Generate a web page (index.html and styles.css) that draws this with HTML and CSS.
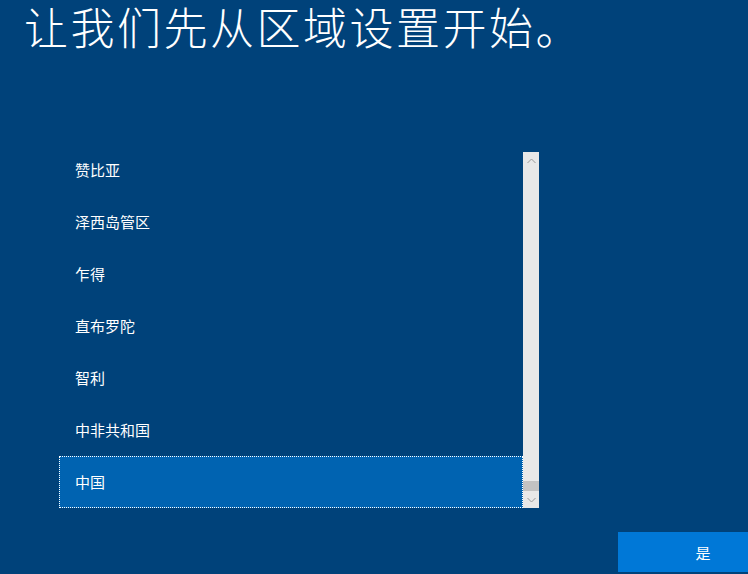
FILE: index.html
```html
<!DOCTYPE html>
<html lang="zh-CN">
<head>
<meta charset="utf-8">
<title>区域设置</title>
<link rel="stylesheet" href="styles.css">
</head>
<body>
<div class="page">
  <header class="header">
    <h1 class="title">让我们先从区域设置开始。</h1>
  </header>
  <div class="listbox">
    <div class="viewport">
      <ul class="items">
        <li class="item">赞比亚</li>
        <li class="item">泽西岛管区</li>
        <li class="item">乍得</li>
        <li class="item">直布罗陀</li>
        <li class="item">智利</li>
        <li class="item">中非共和国</li>
        <li class="item selected">中国</li>
      </ul>
    </div>
    <div class="scrollbar">
      <div class="sb-btn">
        <svg width="9" height="6" viewBox="0 0 9 6"><path d="M0.5 5 L4.5 1 L8.5 5" fill="none" stroke="#9a9a9a" stroke-width="1"/></svg>
      </div>
      <div class="sb-track"><div class="sb-thumb"></div></div>
      <div class="sb-btn">
        <svg width="9" height="6" viewBox="0 0 9 6"><path d="M0.5 1 L4.5 5 L8.5 1" fill="none" stroke="#9a9a9a" stroke-width="1"/></svg>
      </div>
    </div>
  </div>
  <footer class="footer">
    <button class="btn-yes">是</button>
  </footer>
</div>
</body>
</html>
```
FILE: styles.css
```css
html, body {
  margin: 0;
  padding: 0;
}
body {
  width: 748px;
  height: 574px;
  overflow: hidden;
  background: #00427a;
  font-family: "Noto Sans CJK SC", "Noto Sans", sans-serif;
  color: #ffffff;
}
.page {
  display: flex;
  flex-direction: column;
  width: 748px;
  height: 574px;
}
.header {
  height: 152px;
}
.title {
  margin: 0;
  padding: 0 0 0 24px;
  font-size: 44px;
  font-weight: 300;
  line-height: 52px;
  letter-spacing: 2.5px;
  white-space: nowrap;
}
.listbox {
  display: flex;
  margin-left: 59px;
  width: 480px;
  height: 356px;
}
.viewport {
  width: 464px;
  height: 356px;
  overflow: hidden;
}
.items {
  list-style: none;
  margin: -8px 0 0 0;
  padding: 0;
}
.item {
  box-sizing: border-box;
  height: 52px;
  display: flex;
  align-items: center;
  padding-left: 16px;
  font-size: 15px;
  line-height: 20px;
}
.item.selected {
  background: #0063b1;
  border: 1px dotted #ffffff;
  padding-left: 15px;
}
.scrollbar {
  width: 16px;
  display: flex;
  flex-direction: column;
  background: #e8e8e8;
}
.sb-btn {
  height: 17px;
  display: flex;
  align-items: center;
  justify-content: center;
}
.sb-track {
  flex: 1;
  display: flex;
  flex-direction: column;
  justify-content: flex-end;
}
.sb-thumb {
  height: 10px;
  background: #c2c2c2;
}
.footer {
  display: flex;
  margin-top: 24px;
  padding-left: 618px;
}
.btn-yes {
  flex: none;
  box-sizing: border-box;
  width: 130px;
  height: 40px;
  border: none;
  background: #0078d7;
  color: #ffffff;
  font-family: "Noto Sans CJK SC", "Noto Sans", sans-serif;
  font-size: 15px;
  padding: 0 0 0 40px;
}
```
